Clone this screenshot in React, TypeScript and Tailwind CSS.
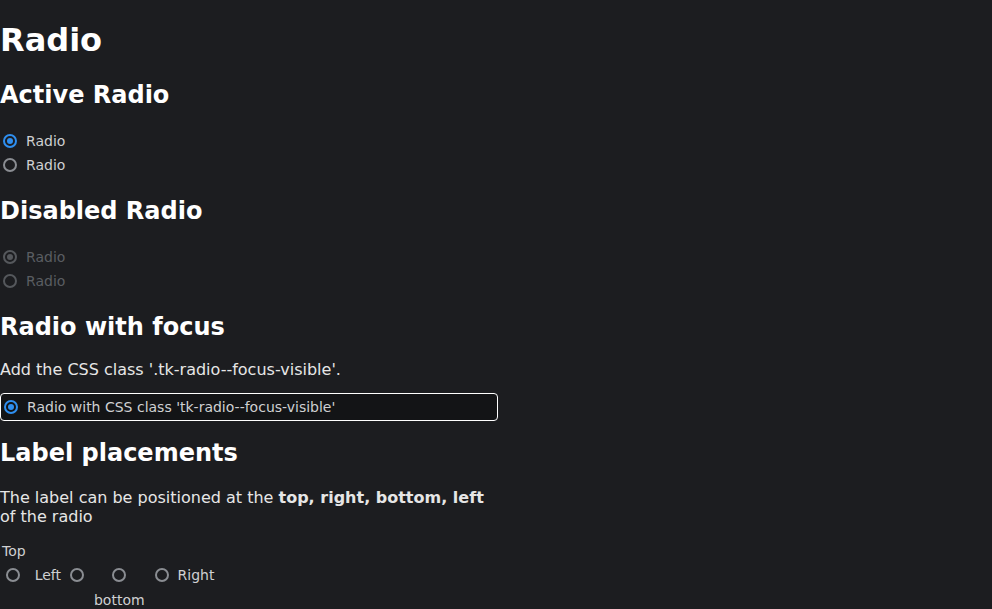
import React from "react";

type RadioProps = { checked?: boolean; disabled?: boolean; className?: string };

function RadioBox({ checked, disabled, className = "" }: RadioProps) {
  const ring = disabled
    ? "border-[#55585c]"
    : checked
    ? "border-[#2f8ff0]"
    : "border-[#8a8d92]";
  const dot = disabled ? "bg-[#55585c]" : "bg-[#2f8ff0]";
  return (
    <span className={`flex h-[20px] w-[20px] shrink-0 items-center justify-center ${className}`}>
      <span className={`flex h-[14px] w-[14px] items-center justify-center rounded-full border-2 ${ring}`}>
        {checked && <span className={`h-[6px] w-[6px] rounded-full ${dot}`} />}
      </span>
    </span>
  );
}

function Label({ children, disabled }: { children: React.ReactNode; disabled?: boolean }) {
  return (
    <span className={`p-[2px] text-[14px] leading-[normal] ${disabled ? "text-[#5a5d62]" : "text-[#cfd0d2]"}`}>
      {children}
    </span>
  );
}

function RadioRow({ checked, disabled, label }: { checked?: boolean; disabled?: boolean; label: string }) {
  return (
    <div className="flex items-center gap-[4px] py-[2px]">
      <RadioBox checked={checked} disabled={disabled} />
      <Label disabled={disabled}>{label}</Label>
    </div>
  );
}

export default function App() {
  return (
    <div
      className="min-h-[609px] w-full overflow-hidden bg-[#1c1d20] text-[#e6e6e6]"
      style={{ fontFamily: '"DejaVu Sans", sans-serif' }}
    >
      <div className="flow-root w-[498px]">
        <h1 className="my-[21.44px] text-[32px] font-bold leading-[normal] text-white">Radio</h1>

        <h2 className="my-[19.92px] text-[24px] font-bold leading-[normal] text-white">Active Radio</h2>
        <div>
          <RadioRow checked label="Radio" />
          <RadioRow label="Radio" />
        </div>

        <h2 className="my-[19.92px] text-[24px] font-bold leading-[normal] text-white">Disabled Radio</h2>
        <div>
          <RadioRow checked disabled label="Radio" />
          <RadioRow disabled label="Radio" />
        </div>

        <h2 className="my-[19.92px] text-[24px] font-bold leading-[normal] text-white">Radio with focus</h2>
        <p className="mt-[16px] mb-[14px] text-[16px] leading-[normal] text-[#e6e6e6]">
          Add the CSS class '.tk-radio--focus-visible'.
        </p>
        <div className="mb-[16px] rounded-[4px] border border-white bg-[#131416] py-[1px]">
          <RadioRow checked label="Radio with CSS class 'tk-radio--focus-visible'" />
        </div>

        <h2 className="mt-[18px] mb-[20.92px] text-[24px] font-bold leading-[normal] text-white">Label placements</h2>
        <p className="mt-[16px] mb-[13px] text-[16px] leading-[normal] text-[#e6e6e6]">
          The label can be positioned at the <b className="font-bold">top, right, bottom, left</b> of the radio
        </p>
        <div className="grid grid-cols-[auto_auto_auto_auto] grid-rows-[auto_20px_auto] justify-start gap-y-[2px]">
          <div className="col-start-1 row-start-1 justify-self-center">
            <Label>Top</Label>
          </div>
          <div className="col-start-1 row-start-2 justify-self-center">
            <RadioBox className="mr-[2px]" />
          </div>

          <div className="col-start-2 row-start-2 ml-[5px] flex items-center gap-[4px]">
            <Label>Left</Label>
            <RadioBox />
          </div>

          <div className="col-start-3 row-start-2 ml-[5px] justify-self-center">
            <RadioBox />
          </div>
          <div className="col-start-3 row-start-3 ml-[5px] mt-[1px] justify-self-center">
            <Label>bottom</Label>
          </div>

          <div className="col-start-4 row-start-2 ml-[5px] flex items-center gap-[4px]">
            <RadioBox />
            <Label>Right</Label>
          </div>
        </div>
      </div>
    </div>
  );
}
